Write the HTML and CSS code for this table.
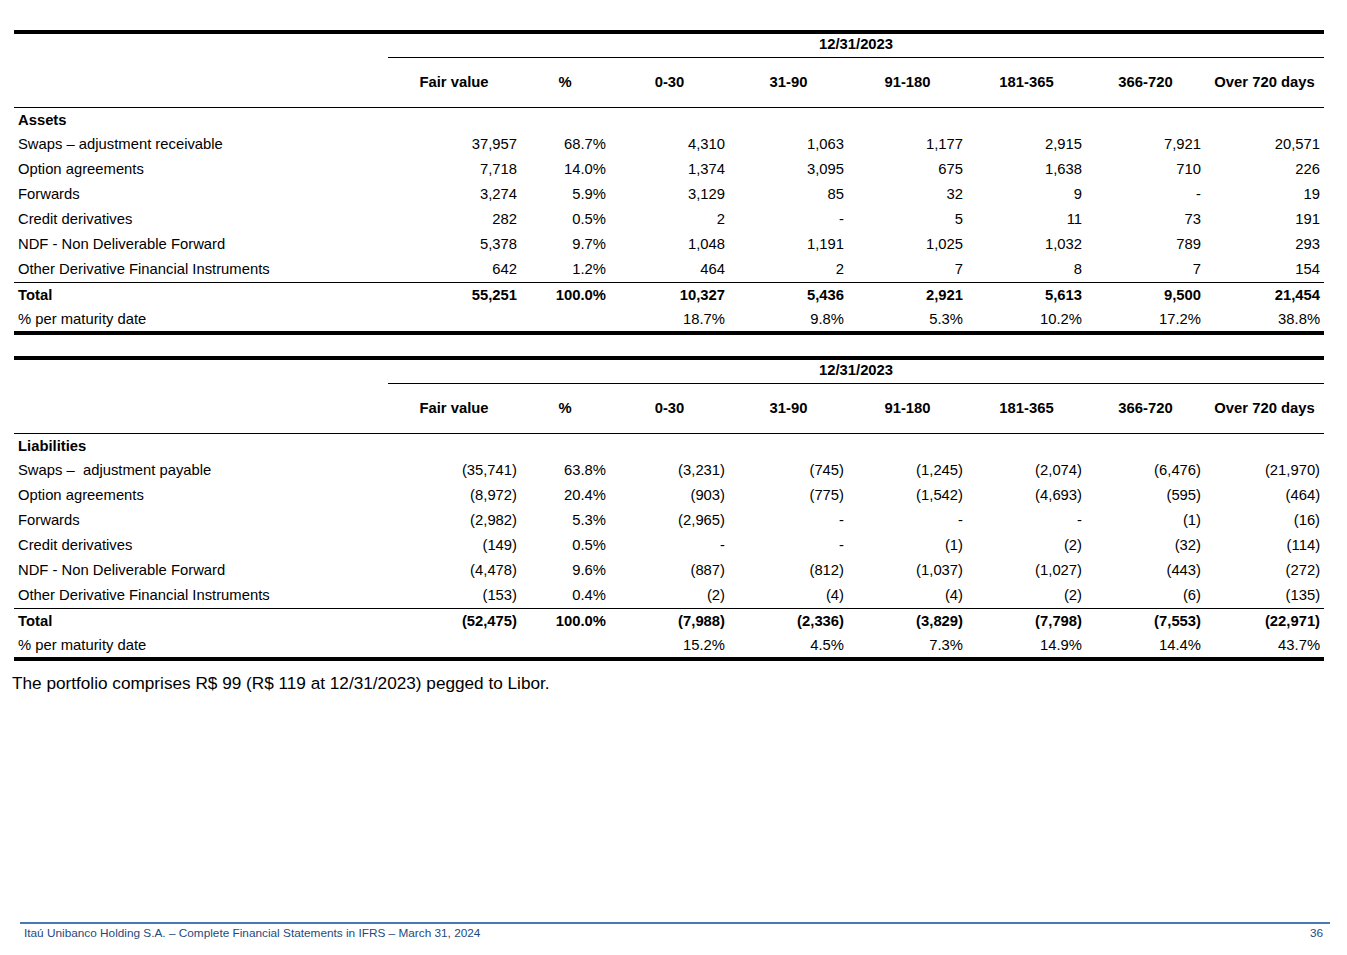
FILE: index.html
```html
<!DOCTYPE html>
<html lang="en">
<head>
<meta charset="utf-8">
<title>Derivatives by maturity</title>
<link rel="stylesheet" href="styles.css">
</head>
<body>
<div class="page">
  <table class="fin first">
    <colgroup>
      <col class="c-label"><col class="c-fv"><col class="c-pct">
      <col class="c-m"><col class="c-m"><col class="c-m"><col class="c-m"><col class="c-m"><col class="c-m">
    </colgroup>
    <tr class="r-date"><td></td><th colspan="8" class="date">12/31/2023</th></tr>
    <tr class="r-head"><td></td><th>Fair value</th><th>%</th><th>0-30</th><th>31-90</th><th>91-180</th><th>181-365</th><th>366-720</th><th>Over 720 days</th></tr>
    <tr class="r-sec"><td class="lbl b">Assets</td><td></td><td></td><td></td><td></td><td></td><td></td><td></td><td></td></tr>
    <tr class="r"><td class="lbl">Swaps – adjustment receivable</td><td class="fv">37,957</td><td>68.7%</td><td>4,310</td><td>1,063</td><td>1,177</td><td>2,915</td><td>7,921</td><td>20,571</td></tr>
    <tr class="r"><td class="lbl">Option agreements</td><td class="fv">7,718</td><td>14.0%</td><td>1,374</td><td>3,095</td><td>675</td><td>1,638</td><td>710</td><td>226</td></tr>
    <tr class="r"><td class="lbl">Forwards</td><td class="fv">3,274</td><td>5.9%</td><td>3,129</td><td>85</td><td>32</td><td>9</td><td>-</td><td>19</td></tr>
    <tr class="r"><td class="lbl">Credit derivatives</td><td class="fv">282</td><td>0.5%</td><td>2</td><td>-</td><td>5</td><td>11</td><td>73</td><td>191</td></tr>
    <tr class="r"><td class="lbl">NDF - Non Deliverable Forward</td><td class="fv">5,378</td><td>9.7%</td><td>1,048</td><td>1,191</td><td>1,025</td><td>1,032</td><td>789</td><td>293</td></tr>
    <tr class="r"><td class="lbl">Other Derivative Financial Instruments</td><td class="fv">642</td><td>1.2%</td><td>464</td><td>2</td><td>7</td><td>8</td><td>7</td><td>154</td></tr>
    <tr class="r-total"><td class="lbl">Total</td><td class="fv">55,251</td><td>100.0%</td><td>10,327</td><td>5,436</td><td>2,921</td><td>5,613</td><td>9,500</td><td>21,454</td></tr>
    <tr class="r-pct"><td class="lbl">% per maturity date</td><td class="fv"></td><td></td><td>18.7%</td><td>9.8%</td><td>5.3%</td><td>10.2%</td><td>17.2%</td><td>38.8%</td></tr>
  </table>

  <table class="fin second">
    <colgroup>
      <col class="c-label"><col class="c-fv"><col class="c-pct">
      <col class="c-m"><col class="c-m"><col class="c-m"><col class="c-m"><col class="c-m"><col class="c-m">
    </colgroup>
    <tr class="r-date"><td></td><th colspan="8" class="date">12/31/2023</th></tr>
    <tr class="r-head"><td></td><th>Fair value</th><th>%</th><th>0-30</th><th>31-90</th><th>91-180</th><th>181-365</th><th>366-720</th><th>Over 720 days</th></tr>
    <tr class="r-sec"><td class="lbl b">Liabilities</td><td></td><td></td><td></td><td></td><td></td><td></td><td></td><td></td></tr>
    <tr class="r"><td class="lbl">Swaps –&nbsp; adjustment payable</td><td class="fv">(35,741)</td><td>63.8%</td><td>(3,231)</td><td>(745)</td><td>(1,245)</td><td>(2,074)</td><td>(6,476)</td><td>(21,970)</td></tr>
    <tr class="r"><td class="lbl">Option agreements</td><td class="fv">(8,972)</td><td>20.4%</td><td>(903)</td><td>(775)</td><td>(1,542)</td><td>(4,693)</td><td>(595)</td><td>(464)</td></tr>
    <tr class="r"><td class="lbl">Forwards</td><td class="fv">(2,982)</td><td>5.3%</td><td>(2,965)</td><td>-</td><td>-</td><td>-</td><td>(1)</td><td>(16)</td></tr>
    <tr class="r"><td class="lbl">Credit derivatives</td><td class="fv">(149)</td><td>0.5%</td><td>-</td><td>-</td><td>(1)</td><td>(2)</td><td>(32)</td><td>(114)</td></tr>
    <tr class="r"><td class="lbl">NDF - Non Deliverable Forward</td><td class="fv">(4,478)</td><td>9.6%</td><td>(887)</td><td>(812)</td><td>(1,037)</td><td>(1,027)</td><td>(443)</td><td>(272)</td></tr>
    <tr class="r"><td class="lbl">Other Derivative Financial Instruments</td><td class="fv">(153)</td><td>0.4%</td><td>(2)</td><td>(4)</td><td>(4)</td><td>(2)</td><td>(6)</td><td>(135)</td></tr>
    <tr class="r-total"><td class="lbl">Total</td><td class="fv">(52,475)</td><td>100.0%</td><td>(7,988)</td><td>(2,336)</td><td>(3,829)</td><td>(7,798)</td><td>(7,553)</td><td>(22,971)</td></tr>
    <tr class="r-pct"><td class="lbl">% per maturity date</td><td class="fv"></td><td></td><td>15.2%</td><td>4.5%</td><td>7.3%</td><td>14.9%</td><td>14.4%</td><td>43.7%</td></tr>
  </table>

  <p class="note">The portfolio comprises R$ 99 (R$ 119 at 12/31/2023) pegged to Libor.</p>

  <footer class="foot">
    <span class="foot-title">Itaú Unibanco Holding S.A. – Complete Financial Statements in IFRS – March 31, 2024</span>
    <span class="foot-page">36</span>
  </footer>
</div>
</body>
</html>
```

FILE: styles.css
```css
html, body {
  margin: 0;
  padding: 0;
  background: #ffffff;
}

.page {
  width: 1347px;
  height: 955px;
  display: flex;
  flex-direction: column;
  font-family: "Liberation Sans", Arial, sans-serif;
  color: #000;
}

.fin {
  width: 1310px;
  margin-left: 14px;
  border-collapse: separate;
  border-spacing: 0;
  table-layout: fixed;
  border-top: 4px solid #000;
  border-bottom: 4px solid #000;
  font-size: 14.8px;
  line-height: 17px;
}

.fin.first { margin-top: 30px; }
.fin.second { margin-top: 21px; }

.c-label { width: 374px; }
.c-fv { width: 132px; }
.c-pct { width: 90px; }
.c-m { width: 119px; }

.fin td,
.fin th {
  padding: 0 4px 0 0;
  text-align: right;
  vertical-align: middle;
  white-space: nowrap;
  font-weight: normal;
}

.fin td.fv { padding-right: 3px; }

.fin th {
  font-weight: bold;
  text-align: center;
  padding: 0;
}

.fin td.lbl {
  text-align: left;
  padding-left: 4px;
}

.fin .b { font-weight: bold; }

.r-date td, .r-date th { height: 23px; padding-top: 0; vertical-align: top; line-height: 21px; }
.r-date th.date { border-bottom: 1px solid #000; }

.r-head td, .r-head th { height: 49px; border-bottom: 1px solid #000; }

.r-sec td { height: 24px; }
.r td { height: 25px; }

.r-total td {
  height: 24px;
  border-top: 1px solid #000;
  font-weight: bold;
}

.r-pct td { height: 24px; }

.note {
  margin: 13px 0 0 12px;
  font-size: 17.2px;
  line-height: 19px;
}

.foot {
  margin: auto 17px 0 20px;
  border-top: 2px solid #4a78b4;
  display: flex;
  justify-content: space-between;
  align-items: flex-start;
  padding: 2px 7px 0 4px;
  height: 29px;
  color: #1f497d;
  font-size: 11.8px;
  line-height: 14px;
}
```
